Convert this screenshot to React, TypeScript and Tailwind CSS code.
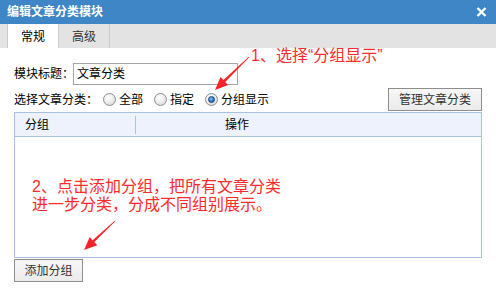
import React from "react";

type Pt = [number, number];

// tapered red annotation arrow, drawn from tail to tip
function arrowPoints(tail: Pt, tip: Pt) {
  const dx = tip[0] - tail[0];
  const dy = tip[1] - tail[1];
  const len = Math.hypot(dx, dy);
  const ux = dx / len;
  const uy = dy / len;
  const nx = -uy;
  const ny = ux;
  const headLen = 13;
  const headW = 5.5;
  const bx = tip[0] - ux * headLen;
  const by = tip[1] - uy * headLen;
  const pts: Pt[] = [
    [tail[0] + nx * 0.4, tail[1] + ny * 0.4],
    [bx + nx * 1.3, by + ny * 1.3],
    [bx + nx * headW, by + ny * headW],
    [tip[0], tip[1]],
    [bx - nx * headW, by - ny * headW],
    [bx - nx * 1.3, by - ny * 1.3],
    [tail[0] - nx * 0.4, tail[1] - ny * 0.4],
  ];
  return pts.map((p) => p.join(",")).join(" ");
}

function Radio({ checked }: { checked?: boolean }) {
  return (
    <span className="flex h-[13px] w-[13px] shrink-0 items-center justify-center rounded-full border border-[#8c8e90] bg-[radial-gradient(circle_at_40%_35%,#ffffff_0%,#f0f0f0_40%,#cfcfcf_100%)]">
      {checked && (
        <span className="h-[7px] w-[7px] rounded-full border border-[#1d3e6b] bg-[radial-gradient(circle_at_40%_35%,#7cc4ff_0%,#2a7fd4_55%,#12508f_100%)]" />
      )}
    </span>
  );
}

export default function App() {
  const font = { fontFamily: '"Liberation Sans", "Noto Sans CJK SC", sans-serif' };

  return (
    <div className="relative h-[292px] w-[496px] overflow-hidden bg-white text-[12px] text-black" style={font}>
      {/* title bar */}
      <div className="flex h-[24px] items-center justify-between bg-[#3e86c6] pl-[7px] pr-[9px]">
        <span className="text-[12px] font-bold leading-none text-white">编辑文章分类模块</span>
        <svg width="11" height="10" viewBox="0 0 11 10">
          <path d="M1.5 1 L9.5 9 M9.5 1 L1.5 9" stroke="#ffffff" strokeWidth="2.4" />
        </svg>
      </div>

      {/* tabs */}
      <div className="flex h-[24px] items-stretch bg-[#e3e3e3] pl-[7px]">
        <div className="flex w-[52px] items-center justify-center border-x border-[#cbcbcb] bg-white pt-[1px]">常规</div>
        <div className="flex w-[51px] items-center justify-center border-r border-[#cbcbcb] pt-[1px] text-[#333]">高级</div>
      </div>

      {/* body */}
      <div className="flex flex-col px-[14px]">
        <div className="mt-[15px] flex h-[22px] items-center">
          <span className="w-[59px] shrink-0 whitespace-nowrap">模块标题：</span>
          <div className="flex h-[22px] w-[165px] items-center border border-[#a6a6a6] px-[3px]">文章分类</div>
        </div>

        <div className="mt-[3px] flex h-[23px] items-center whitespace-nowrap">
          <span className="w-[89px] shrink-0">选择文章分类：</span>
          <Radio />
          <span className="ml-[3px] mr-[11px]">全部</span>
          <Radio />
          <span className="ml-[3px] mr-[11px]">指定</span>
          <Radio checked />
          <span className="ml-[3px]">分组显示</span>
          <button className="ml-auto flex h-[23px] w-[94px] items-center justify-center border border-[#8e8e8e] bg-[linear-gradient(#f7f7f7,#ebebeb)] text-[#333]">
            管理文章分类
          </button>
        </div>

        <div className="mt-[1px] flex h-[146px] flex-col border border-[#aac1e6]">
          <div className="flex h-[24px] items-center border-b border-[#aac1e6] bg-[#edf2fd]">
            <span className="w-[120px] pl-[10px]">分组</span>
            <span className="h-[18px] w-px bg-[#aac1e6]" />
            <span className="pl-[89px]">操作</span>
          </div>
          <div className="flex-1" />
        </div>

        <div className="mt-[1px]">
          <button className="flex h-[23px] w-[69px] items-center justify-center border border-[#8e8e8e] bg-[linear-gradient(#f7f7f7,#ebebeb)] text-[#333]">
            添加分组
          </button>
        </div>
      </div>

      {/* annotations */}
      <div className="absolute left-[251px] top-[46px] text-[16px] leading-[19px] text-[#ff2b2b]">1、选择“分组显示”</div>
      <div className="absolute left-[32px] top-[178px] text-[16px] leading-[18px] text-[#ff2b2b]">
        <div>2、点击添加分组，把所有文章分类</div>
        <div>进一步分类，分成不同组别展示。</div>
      </div>
      <svg className="pointer-events-none absolute left-0 top-0" width="496" height="292">
        <polygon points={arrowPoints([249, 57], [215, 90])} fill="#f5242a" />
        <polygon points={arrowPoints([115, 221], [84, 250])} fill="#f5242a" />
      </svg>
    </div>
  );
}
